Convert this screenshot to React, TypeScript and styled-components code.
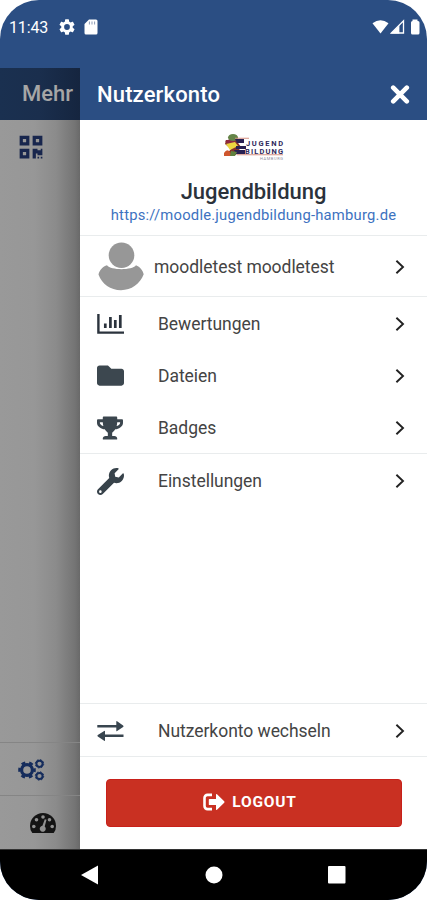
import React from 'react';
import styled, { createGlobalStyle, css } from 'styled-components';
import { FaQrcode, FaFolder, FaTrophy, FaWrench } from 'react-icons/fa';

const Global = createGlobalStyle`
  * { box-sizing: border-box; }
  body { margin: 0; background: #fff; font-family: Roboto, sans-serif; }
  svg { display: block; flex: none; }
`;

const Phone = styled.div`
  width: 427px;
  height: 900px;
  display: flex;
  flex-direction: column;
  overflow: hidden;
  border-radius: 39px;
  background: #2b4e83;
`;

const StatusBar = styled.header`
  height: 68px;
  padding: 17px 6px 0 9px;
  display: flex;
  align-items: flex-start;
  color: #fff;
`;

const Clock = styled.span`
  width: 50px;
  font-size: 16px;
  line-height: 22px;
  letter-spacing: -0.15px;
  white-space: nowrap;
`;

const StatusGroup = styled.div<{ $end?: boolean }>`
  display: flex;
  align-items: center;
  height: 20px;
  gap: ${p => (p.$end ? '1px' : '9px')};
  margin-left: ${p => (p.$end ? 'auto' : '0')};
`;

const Screen = styled.div`
  height: 781px;
  display: flex;
`;

const Backdrop = styled.aside`
  width: 80px;
  display: flex;
  flex-direction: column;
  overflow: hidden;
  background: linear-gradient(90deg, #999 0, #979797 34px, #8b8b8b 56px, #747474 75px, #696969 80px);
`;

const BackdropTitle = styled.div`
  height: 52px;
  padding-left: 22px;
  background: linear-gradient(90deg, #1a3050 0, #1a2e4d 40px, #15253f 80px);
  color: #a6a6a6;
  font-size: 22px;
  font-weight: 500;
  line-height: 52px;
`;

const BackdropRow = styled.div<{ $h: number; $left: number; $line?: boolean; $color: string }>`
  height: ${p => p.$h}px;
  padding-left: ${p => p.$left}px;
  padding-top: 1px;
  display: flex;
  align-items: center;
  color: ${p => p.$color};
  ${p => p.$line && css`border-top: 1px solid #858585;`}
`;

const Spacer = styled.div`
  flex: 1;
`;

const Drawer = styled.main`
  flex: 1;
  display: flex;
  flex-direction: column;
  background: #fff;
`;

const DrawerHeader = styled.div`
  height: 52px;
  padding: 0 17px;
  display: flex;
  align-items: center;
  justify-content: space-between;
  background: #2b4e83;
  color: #fff;
`;

const DrawerTitle = styled.h1`
  margin: 0;
  font-size: 22px;
  font-weight: 500;
  letter-spacing: 0.15px;
`;

const Site = styled.section`
  height: 115px;
  padding: 13px 0 0 0;
  display: flex;
  flex-direction: column;
  align-items: center;
`;

const SiteName = styled.h2`
  margin: 17px 0 0;
  font-size: 22px;
  line-height: 26px;
  font-weight: 500;
  letter-spacing: -0.05px;
  color: #2b323b;
`;

const SiteUrl = styled.a`
  margin-top: -1px;
  font-size: 14.8px;
  line-height: 22px;
  letter-spacing: 0.21px;
  color: #3d72bf;
`;

const Row = styled.div<{ $h?: number; $top?: boolean; $bottom?: boolean }>`
  height: ${p => p.$h ?? 52}px;
  padding: 1px 22px 0 17px;
  display: flex;
  align-items: center;
  color: #353b42;
  border-top: ${p => (p.$top ? '1px solid #e9eced' : '0')};
  border-bottom: ${p => (p.$bottom ? '1px solid #e9eced' : '0')};
`;

const IconSlot = styled.div<{ $w?: number; $left?: number }>`
  width: ${p => p.$w ?? 61}px;
  padding-left: ${p => p.$left ?? 0}px;
  flex: none;
`;

const Label = styled.span`
  flex: 1;
  font-size: 17.5px;
  line-height: 24px;
  letter-spacing: -0.04px;
  color: #444;
  white-space: nowrap;
`;

const Footer = styled.div`
  height: 92px;
  padding: 22px 25px 0 26px;
`;

const Logout = styled.button`
  width: 100%;
  height: 48px;
  padding: 0 8px 2px 0;
  border: 1px solid #c8201a;
  border-radius: 4px;
  display: flex;
  align-items: center;
  justify-content: center;
  gap: 7px;
  background: #c93022;
  color: #fff;
  font: 700 15.5px/20px Roboto, sans-serif;
  letter-spacing: 0.8px;
`;

const NavBar = styled.nav`
  flex: 1;
  padding: 0 81px;
  display: flex;
  align-items: center;
  justify-content: space-between;
  background: #000;
  border-top: 1px solid #333;
`;

const Chevron = () => (
  <svg width="10" height="16" viewBox="0 0 10 16" fill="none" stroke="#222" strokeWidth="1.9">
    <path d="M1.4 1.8 8 8l-6.600 6.200" />
  </svg>
);

const Gear = () => (
  <svg width="16" height="16" viewBox="2 2 20 20" fill="#fff">
    <path d="M19.14 12.94a7 7 0 0 0 0-1.88l2.03-1.58a.5.5 0 0 0 .12-.61l-1.92-3.32a.5.5 0 0 0-.59-.22l-2.39.96a7 7 0 0 0-1.62-.94L14.4 2.8a.5.5 0 0 0-.48-.4h-3.84a.5.5 0 0 0-.47.4l-.36 2.55a7.4 7.4 0 0 0-1.62.94l-2.39-.96a.5.5 0 0 0-.59.22L2.74 8.87a.5.5 0 0 0 .12.61l2.03 1.58a7 7 0 0 0 0 1.88l-2.03 1.58a.5.5 0 0 0-.12.61l1.92 3.32c.12.22.37.29.59.22l2.39-.96c.5.38 1.03.7 1.62.94l.36 2.54c.05.24.24.41.48.41h3.84c.24 0 .44-.17.47-.41l.36-2.54a7.4 7.4 0 0 0 1.62-.94l2.39.96c.22.08.47 0 .59-.22l1.92-3.32a.5.5 0 0 0-.12-.61zM12 15.6a3.6 3.6 0 1 1 0-7.2 3.6 3.6 0 0 1 0 7.2z" />
  </svg>
);

const Cogs = () => (
  <svg width="27" height="22" viewBox="0 0 27 22" fill="none" stroke="#152c5c">
    <circle cx="9" cy="11" r="5.400" strokeWidth="3.200" />
    <circle cx="9" cy="11" r="7.500" strokeWidth="2.600" strokeDasharray="3.900 3.954" strokeDashoffset="1.950" />
    <circle cx="21.500" cy="4.800" r="3.100" strokeWidth="2" />
    <circle cx="21.500" cy="4.800" r="4.200" strokeWidth="1" strokeDasharray="1.600 1.700" />
    <circle cx="21.500" cy="17" r="3.100" strokeWidth="2" />
    <circle cx="21.500" cy="17" r="4.200" strokeWidth="1" strokeDasharray="1.600 1.700" />
  </svg>
);

const Gauge = () => (
  <svg width="26" height="20" viewBox="0 0 26 20">
    <path d="M2.300 20Q0 17.500 0 13a13 13 0 0 1 26 0q0 4.500-2.300 7z" fill="#141414" />
    <g fill="#919191">
      <circle cx="3.800" cy="13.500" r="1.800" />
      <circle cx="6.500" cy="6.800" r="1.800" />
      <circle cx="13" cy="4" r="1.800" />
      <circle cx="19.500" cy="6.800" r="1.800" />
      <circle cx="22.200" cy="13.500" r="1.800" />
      <path d="M14.800 6.200 16.500 6.700 14.700 13.500A3 3 0 1 1 12.400 12.800z" />
    </g>
  </svg>
);

const ChartIcon = () => (
  <svg width="27" height="20" viewBox="0 0 27 20" fill="none" stroke="#2b333d">
    <path d="M1.400 0v18.600H27" strokeWidth="2.400" />
    <path d="M8.300 9.500v4.500M13.400 3v11M18.300 6v8M23.300 1v13" strokeWidth="2.700" />
  </svg>
);

const SwapIcon = () => (
  <svg width="27" height="20" viewBox="0 0 27 20" fill="#38454f">
    <path d="M.3 4.100h19V.5q0-.8.8-.3l6 4.300q.8.8 0 1.600l-6 4q-.8.4-.8-.4V6.600H.3zM26.500 13.400H8V10.200q0-.8-.8-.3L.8 14q-.8.8 0 1.500l6.400 4.200q.8.5.8-.3v-3.500h18.500z" />
  </svg>
);

const Avatar = () => (
  <svg width="46" height="49" viewBox="0 0 46 49" fill="#979797">
    <circle cx="23.500" cy="13.200" r="12.800" />
    <path d="M9 23.300C13 28.500 34 28.500 38 23.300c4 1.500 7 5.400 7.700 9C42 42 33.500 48.200 23 48.200S4 42 .5 32.500c.8-4 4.500-8.200 8.500-9.200z" />
  </svg>
);

const LogoutIcon = () => (
  <svg width="22" height="18" viewBox="0 0 22 18">
    <path d="M9 1.900H4.500a3 3 0 0 0-3 3v8.200a3 3 0 0 0 3 3H9" fill="none" stroke="#fff" strokeWidth="2.600" />
    <path d="M6.500 5.900H13V1.800q0-1.300 1-.5l7.200 7q.7.700 0 1.400l-7.200 7q-1 .8-1-.5v-4.100H6.500q-.7 0-.7-.7V6.600q0-.7.700-.7z" fill="#fff" />
  </svg>
);

const SiteLogo = () => (
  <svg width="62" height="29" viewBox="0 0 62 29">
    <path d="M3 7h10l5 7-5 8H3l5-6-6-5z" fill="#87332b" />
    <path d="M2 8l8-3 3 5-5 3z" fill="#8d2743" />
    <ellipse cx="10" cy="4.500" rx="5" ry="3.500" fill="#648448" />
    <path d="M3 11l9-2 3 4-8 4z" fill="#ecd641" />
    <path d="M12 6h9v4h-7zM13 13h10v3H13zM11 17h11v4H13z" fill="#292153" />
    <path d="M1 20q3-5 6-1l2 4H1z" fill="#cf562d" />
    <path d="M8 18l6 1-2 4H7z" fill="#60813f" />
    <path d="M12 5.300h14M14 21.800h46" stroke="#d69182" strokeWidth="1.100" />
    <g fill="#302a5c" fontFamily="Roboto, sans-serif" fontWeight="700">
      <text x="23" y="13" fontSize="7.500" textLength="37">JUGEND</text>
      <text x="22" y="20.700" fontSize="7.500" textLength="38">BILDUNG</text>
    </g>
    <text x="37" y="26.700" fontSize="4" textLength="23" fill="#8f8c9c" fontFamily="Roboto, sans-serif">HAMBURG</text>
  </svg>
);

const menu = [
  { label: 'Bewertungen', icon: <ChartIcon /> },
  { label: 'Dateien', icon: <FaFolder size={27} color="#3c474f" /> },
  { label: 'Badges', icon: <FaTrophy size={26} color="#3b464e" /> },
];

export default function App() {
  return (
    <>
      <Global />
      <Phone>
        <StatusBar>
          <Clock>11:43</Clock>
          <StatusGroup>
            <Gear />
            <svg width="14" height="16" viewBox="0 0 14 16">
              <path d="M5 .5h7q1.500 0 1.500 1.500v12q0 1.500-1.500 1.500H2Q.5 15.500.5 14V5z" fill="#fff" />
              <path d="M5.400 2.500v3M8 2.500v3M10.600 2.500v3" stroke="#8d9bb6" />
            </svg>
          </StatusGroup>
          <StatusGroup $end>
            <svg width="17" height="16" viewBox="0 0 18 16" fill="#fff">
              <path d="M.5 4Q9-2.500 17.500 4L9 15z" />
            </svg>
            <svg width="15" height="16" viewBox="0 0 16 16">
              <path d="M1.500 14.400 14.400 1.500v12.900z" fill="none" stroke="#fff" strokeWidth="1.400" />
              <path d="M1 15 10 6v9z" fill="#fff" />
            </svg>
            <svg width="15" height="16" viewBox="0 0 15 16" fill="#fff">
              <path d="M6.500 2V.5h5V2H12q1.500 0 1.500 1.500V14q0 1.500-1.500 1.500H6.500Q5 15.500 5 14V3.500Q5 2 6.500 2z" />
            </svg>
          </StatusGroup>
        </StatusBar>
        <Screen>
          <Backdrop>
            <BackdropTitle>Mehr</BackdropTitle>
            <BackdropRow $h={52} $left={18} $color="#18264d"><FaQrcode size={26} /></BackdropRow>
            <Spacer />
            <BackdropRow $h={53} $left={18} $line $color="#152c5c"><Cogs /></BackdropRow>
            <BackdropRow $h={54} $left={30} $line $color="#141414"><Gauge /></BackdropRow>
          </Backdrop>
          <Drawer>
            <DrawerHeader>
              <DrawerTitle>Nutzerkonto</DrawerTitle>
              <svg width="20" height="20" viewBox="0 0 20 20" fill="none" stroke="#fff" strokeWidth="4.600" strokeLinecap="round">
                <path d="m3.200 3.700 13.600 13.600M16.800 3.700 3.200 17.300" />
              </svg>
            </DrawerHeader>
            <Site>
              <SiteLogo />
              <SiteName>Jugendbildung</SiteName>
              <SiteUrl>https://moodle.jugendbildung-hamburg.de</SiteUrl>
            </Site>
            <Row $h={62} $top $bottom>
              <IconSlot $w={57} $left={1}><Avatar /></IconSlot>
              <Label>moodletest moodletest</Label>
              <Chevron />
            </Row>
            {menu.map(item => (
              <Row key={item.label}>
                <IconSlot>{item.icon}</IconSlot>
                <Label>{item.label}</Label>
                <Chevron />
              </Row>
            ))}
            <Row $h={54} $top>
              <IconSlot><FaWrench size={27} color="#38434b" /></IconSlot>
              <Label>Einstellungen</Label>
              <Chevron />
            </Row>
            <Spacer />
            <Row $h={54} $top $bottom>
              <IconSlot><SwapIcon /></IconSlot>
              <Label>Nutzerkonto wechseln</Label>
              <Chevron />
            </Row>
            <Footer>
              <Logout><LogoutIcon />LOGOUT</Logout>
            </Footer>
          </Drawer>
        </Screen>
        <NavBar>
          <svg width="18" height="20" viewBox="0 0 18 20" fill="#fff"><path d="M0 10 17 .5v19z" /></svg>
          <svg width="18" height="18" viewBox="0 0 18 18" fill="#fff"><circle cx="9" cy="9" r="8.500" /></svg>
          <svg width="18" height="18" viewBox="0 0 18 18" fill="#fff"><rect width="17.500" height="17.500" rx="1" /></svg>
        </NavBar>
      </Phone>
    </>
  );
}
